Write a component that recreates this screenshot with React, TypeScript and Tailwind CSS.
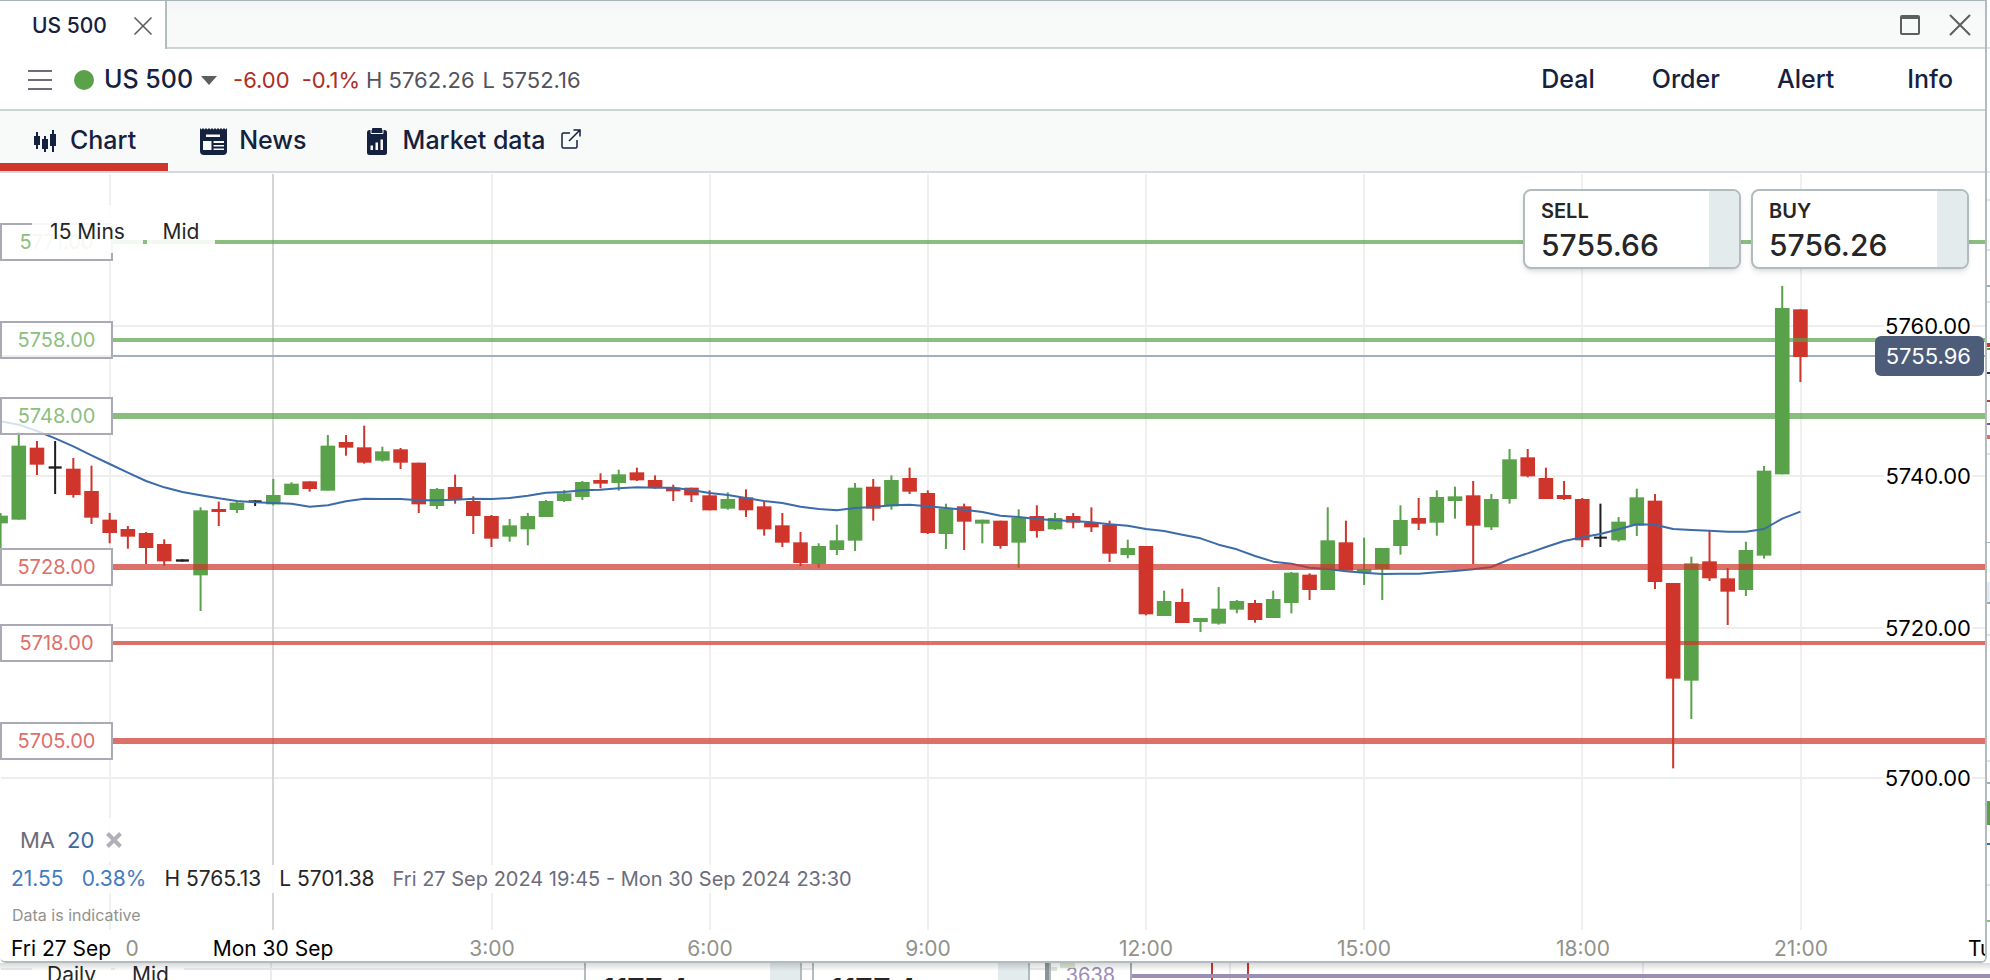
import { ReactNode } from 'react';
import { X } from 'lucide-react';

type Candle = [dir: 'g' | 'r' | 'k', high: number, top: number, bottom: number, low: number];

// prices are kept as offsets (thirds of a pixel) below BASE_Y
const BASE_Y = 227;
const START_X = 273.3;
const STEP = 18.18;
const FIRST = -15;

const candles: Candle[] = [
  ['g', 339, 347, 370, 555], ['g', 95, 137, 359, 359], ['r', 123, 143, 194, 225], ['k', 123, 199, 206, 282],
  ['r', 174, 206, 285, 293], ['r', 197, 273, 353, 372], ['r', 339, 359, 399, 430], ['r', 378, 387, 410, 446],
  ['r', 396, 399, 444, 492], ['r', 418, 432, 484, 497], ['k', 478, 478, 485, 485], ['g', 322, 331, 526, 633],
  ['r', 305, 327, 336, 378], ['g', 305, 308, 330, 339], ['k', 301, 301, 307, 318], ['g', 237, 285, 313, 316],
  ['g', 247, 251, 285, 285], ['r', 244, 244, 267, 275], ['g', 105, 137, 272, 272], ['r', 105, 126, 143, 167],
  ['r', 77, 142, 188, 191], ['g', 140, 154, 182, 185], ['r', 144, 148, 188, 207], ['r', 188, 188, 313, 339],
  ['g', 264, 267, 318, 327], ['r', 224, 261, 298, 311], ['r', 289, 303, 348, 402], ['r', 345, 348, 416, 441],
  ['g', 357, 376, 410, 425], ['g', 339, 348, 388, 436], ['g', 300, 303, 351, 351], ['g', 270, 280, 303, 306],
  ['g', 243, 246, 291, 300], ['r', 220, 240, 251, 265], ['g', 209, 223, 249, 272], ['r', 203, 217, 241, 243],
  ['r', 226, 240, 263, 266], ['r', 254, 263, 274, 303], ['r', 263, 263, 286, 306], ['r', 271, 286, 331, 331],
  ['g', 277, 297, 326, 329], ['r', 268, 292, 331, 351], ['r', 305, 319, 388, 407], ['r', 339, 376, 428, 441],
  ['r', 396, 427, 489, 498], ['g', 430, 438, 492, 503], ['g', 374, 421, 450, 465], ['g', 249, 263, 422, 453],
  ['r', 237, 260, 326, 362], ['g', 226, 240, 319, 329], ['r', 203, 234, 275, 282], ['r', 271, 279, 399, 402],
  ['g', 311, 325, 402, 447], ['r', 311, 319, 365, 450], ['g', 359, 359, 371, 430], ['r', 362, 362, 438, 446],
  ['g', 328, 353, 428, 503], ['r', 316, 348, 393, 413], ['g', 339, 354, 388, 390], ['r', 339, 348, 368, 385],
  ['r', 322, 368, 382, 396], ['r', 362, 374, 461, 486], ['g', 419, 444, 465, 475], ['r', 438, 438, 643, 646],
  ['g', 572, 603, 648, 648], ['r', 566, 606, 669, 669], ['g', 654, 654, 666, 696], ['g', 561, 626, 671, 674],
  ['g', 600, 603, 629, 640], ['r', 600, 609, 660, 668], ['g', 572, 597, 654, 654], ['g', 516, 518, 609, 640],
  ['r', 520, 524, 570, 600], ['g', 322, 421, 570, 570], ['r', 362, 427, 512, 512], ['g', 413, 508, 516, 555],
  ['g', 444, 444, 507, 600], ['g', 316, 360, 438, 464], ['r', 294, 354, 371, 390], ['g', 271, 291, 368, 407],
  ['g', 260, 289, 303, 356], ['r', 243, 286, 377, 492], ['g', 282, 297, 382, 390], ['g', 147, 178, 297, 311],
  ['r', 147, 172, 229, 232], ['r', 203, 234, 297, 297], ['r', 243, 285, 297, 300], ['r', 294, 297, 421, 441],
  ['k', 311, 410, 416, 441], ['g', 351, 365, 421, 425], ['g', 266, 292, 377, 408], ['r', 282, 302, 546, 567],
  ['r', 549, 549, 836, 1105], ['g', 470, 490, 842, 957], ['r', 392, 484, 535, 543], ['r', 504, 535, 575, 675],
  ['g', 425, 450, 570, 588], ['g', 198, 212, 467, 476], ['g', -342, -276, 223, 223], ['r', -272, -272, -129, -54],
];

const movingAverage = [
  64, 74, 93, 115, 139, 166, 192, 218, 243, 262, 276, 286, 295, 303, 307, 309, 311, 320, 316, 304,
  296, 297, 297, 301, 301, 299, 296, 297, 294, 287, 278, 276, 271, 269, 265, 262, 263, 263, 270, 279,
  285, 294, 303, 309, 320, 327, 331, 324, 321, 316, 314, 319, 324, 329, 336, 347, 351, 357, 361, 363,
  367, 373, 377, 387, 393, 404, 415, 434, 448, 468, 485, 491, 503, 507, 514, 518, 522, 521, 521, 517,
  513, 508, 501, 478, 460, 441, 423, 412, 402, 388, 373, 374, 387, 390, 392, 395, 395, 387, 356, 335,
];

const fills = { g: '#59a249', r: '#cf352b', k: '#1f1f1f' };

const levels = [
  { price: '5771.00', y: 69, width: 4, color: '#59a249', text: 'text-[#8bbf80]' },
  { price: '5758.00', y: 167, width: 4, color: '#59a249', text: 'text-[#8bbf80]' },
  { price: '5748.00', y: 243, width: 6, color: '#59a249', text: 'text-[#8bbf80]' },
  { price: '5728.00', y: 394, width: 6, color: '#cf352b', text: 'text-[#dd7069]' },
  { price: '5718.00', y: 470, width: 4, color: '#cf352b', text: 'text-[#dd7069]' },
  { price: '5705.00', y: 568, width: 6, color: '#cf352b', text: 'text-[#dd7069]' },
];

const prices = [
  { label: '5760.00', y: 153 },
  { label: '5740.00', y: 303 },
  { label: '5720.00', y: 455 },
  { label: '5700.00', y: 605 },
];

const times = [
  { label: 'Fri 27 Sep', x: 61, day: true },
  { label: '0', x: 132 },
  { label: 'Mon 30 Sep', x: 273, day: true },
  { label: '3:00', x: 492 },
  { label: '6:00', x: 710 },
  { label: '9:00', x: 928 },
  { label: '12:00', x: 1146 },
  { label: '15:00', x: 1364 },
  { label: '18:00', x: 1583 },
  { label: '21:00', x: 1801 },
  { label: 'Tue 1 Oct', x: 2014, day: true },
];

const gridX = [110, 492, 710, 928, 1146, 1364, 1582, 1801];

const xAt = (i: number) => START_X + (FIRST + i) * STEP;
const yAt = (v: number) => BASE_Y + v / 3;

function CandlesIcon() {
  return (
    <svg className="h-[22px] w-[26px]" viewBox="0 0 24 22" fill="#14213f">
      <path d="M1 6h6v9H1zM3 2h2v17H3zM9 9h6v10H9zM11 6h2v16h-2zM17 4h6v12h-6zM19 0h2v22h-2z" />
    </svg>
  );
}

function NewsIcon() {
  return (
    <svg className="h-[27px] w-[27px]" viewBox="0 0 27 27">
      <path
        fill="#14213f"
        d="M0 0l1.500 1.500L3 0l1.500 1.500L6 0l1.500 1.500L9 0l1.500 1.500L12 0l1.500 1.500L15 0l1.500 1.500L18 0l1.500 1.500L21 0l1.500 1.500L24 0l1.500 1.500L27 0v23a4 4 0 0 1-4 4H4a4 4 0 0 1-4-4z"
      />
      <path fill="#f8faf9" d="M6 6.500h14V9H6zM3 13h8.500v9H3zM13.500 13H24v2H13.500zM13.500 17H24v1.500H13.500zM13.500 20.500H24V22H13.500z" />
    </svg>
  );
}

function MarketIcon() {
  return (
    <svg className="h-[27px] w-6" viewBox="0 0 24 27">
      <rect y="2" width="20" height="25" rx="2.500" fill="#14213f" />
      <path d="M4 2v3.500h12V2" fill="none" stroke="#f8faf9" strokeWidth="1" />
      <rect x="5" y="0" width="10" height="4.500" rx="1" fill="#14213f" />
      <path fill="#f8faf9" d="M3.500 17.500h2.500v4.500H3.500zM8.500 14.500H11V22H8.500zM13.500 11.500H16V22h-2.500z" />
    </svg>
  );
}

function ExternalIcon() {
  return (
    <svg className="mb-1 h-5 w-5" viewBox="0 0 20 20" fill="none" stroke="#14213f" strokeWidth="1.500">
      <path d="M9 4H2.500A1.500 1.500 0 0 0 1 5.500v12A1.500 1.500 0 0 0 2.500 19h12a1.500 1.500 0 0 0 1.500-1.500V11" />
      <path d="M12.500 1H19v6.500M19 1L8 12" />
    </svg>
  );
}

function Tab({ icon, label, active, children }: { icon: ReactNode; label: string; active?: boolean; children?: ReactNode }) {
  return (
    <button
      className={`flex h-full items-center border-b-8 pt-2 pl-8 text-[25px] font-medium text-[#14213f] ${
        active ? 'border-[#cf352b] pr-8' : 'border-transparent'
      }`}
    >
      {icon}
      <span className="ml-3">{label}</span>
      {children}
    </button>
  );
}

function PriceBox({ side, price }: { side: string; price: string }) {
  return (
    <button className="flex h-20 w-[218px] overflow-hidden rounded-lg border-2 border-[#b2bcbf] bg-white text-left text-[#262626] shadow-md">
      <span className="flex flex-1 flex-col pt-[6px] pl-4">
        <span className="text-xl leading-7 font-semibold">{side}</span>
        <span className="text-[30px] leading-10 font-medium">{price}</span>
      </span>
      <span className="w-[30px] self-stretch bg-[#e3ebed]" />
    </button>
  );
}

function Plot() {
  return (
    <svg className="absolute inset-0 h-full w-full" aria-label="US 500 15 minute chart">
      {prices.map((p) => (
        <line key={p.label} x1="1" x2="100%" y1={p.y} y2={p.y} stroke="#eeeeef" strokeWidth="2" />
      ))}
      {gridX.map((x) => (
        <line key={x} x1={x} x2={x} y1="1" y2="757" stroke="#efeff0" strokeWidth="2" />
      ))}
      <line x1="273" x2="273" y1="1" y2="757" stroke="#d4d4d9" strokeWidth="2" />
      <line x1="0" x2="100%" y1="183" y2="183" stroke="#a2adbd" strokeWidth="2" />

      {candles.map(([dir, high, top, bottom, low], i) => {
        const w = dir === 'k' ? 13 : 14.6;
        return (
          <g key={i} fill={fills[dir]}>
            <rect x={xAt(i) - 1} y={yAt(high)} width="2" height={(low - high) / 3} />
            <rect x={xAt(i) - w / 2} y={yAt(top)} width={w} height={(bottom - top) / 3} />
          </g>
        );
      })}

      <polyline
        fill="none"
        stroke="#3b6ba8"
        strokeWidth="2"
        strokeLinejoin="round"
        points={movingAverage.map((v, i) => `${xAt(i)},${yAt(v)}`).join(' ')}
      />

      {levels.map((l) => (
        <line
          key={l.price}
          x1="112"
          x2="100%"
          y1={l.y}
          y2={l.y}
          stroke={l.color}
          strokeWidth={l.width}
          strokeOpacity="0.7"
        />
      ))}
    </svg>
  );
}

function Chart() {
  return (
    <main className="relative min-h-[760px] flex-1 overflow-hidden bg-white">
      <Plot />

      {levels.map((l) => (
        <div
          key={l.price}
          className={`absolute left-0 flex h-[38px] w-[113px] -translate-y-1/2 items-center justify-center border-2 border-[#aaaab6] bg-white/80 text-xl ${l.text}`}
          style={{ top: l.y }}
        >
          {l.price}
        </div>
      ))}

      <div className="absolute top-8 left-8 flex gap-1 text-[21px] text-[#262626]">
        <button className="h-12 w-[111px] bg-white/90 pt-[6px]">15 Mins</button>
        <button className="h-12 w-[68px] bg-white/90 pt-[6px]">Mid</button>
      </div>

      <div className="absolute top-4 right-4 flex gap-[10px]">
        <PriceBox side="SELL" price="5755.66" />
        <PriceBox side="BUY" price="5756.26" />
      </div>

      {prices.map((p) => (
        <div
          key={p.label}
          className="absolute right-[13px] -translate-y-1/2 bg-white px-px text-[22px] leading-5 text-black"
          style={{ top: p.y }}
        >
          {p.label}
        </div>
      ))}
      <div className="absolute top-[163px] right-[1px] flex h-10 items-center rounded-md bg-[#4d5c79] pt-px pr-[13px] pl-[11px] text-[22px] text-white">
        5755.96
      </div>

      <div className="absolute bottom-0 left-0 w-full">
        <div className="flex flex-col items-start">
          <div className="mb-[3px] ml-3 flex h-11 items-center gap-3 bg-white/90 px-2 text-[22px]">
            <span className="text-[#6c6c78]">MA</span>
            <span className="text-[#3b67a5]">20</span>
            <button aria-label="Remove moving average">
              <svg className="h-4 w-4" viewBox="0 0 16 16" stroke="#b0b0b8" strokeWidth="4">
                <path d="M1.500 1.500l13 13M14.500 1.500l-13 13" />
              </svg>
            </button>
          </div>
          <div className="flex h-7 items-center gap-[18px] bg-white/90 pr-3 pl-[11px] text-[21px] whitespace-nowrap">
            <span className="text-[#447bc0]">21.55</span>
            <span className="text-[#447bc0]">0.38%</span>
            <span className="text-[#262626]">H 5765.13</span>
            <span className="text-[#262626]">L 5701.38</span>
            <span className="text-xl text-[#6c6c7c]">Fri 27 Sep 2024 19:45 - Mon 30 Sep 2024 23:30</span>
          </div>
          <p className="flex h-10 items-center pt-1 pl-3 text-base text-[#92928f]">Data is indicative</p>
        </div>
        <div className="relative h-7 bg-white text-[21px] leading-8">
          {times.map((t) => (
            <span
              key={t.label}
              className={`absolute top-0 -translate-x-1/2 whitespace-nowrap ${t.day ? 'text-black' : 'text-[#92928c]'}`}
              style={{ left: t.x }}
            >
              {t.label}
            </span>
          ))}
        </div>
      </div>
    </main>
  );
}

// slivers of the windows that sit behind this one
function RightEdge() {
  return (
    <svg className="h-full w-[3px] shrink-0 bg-white" viewBox="0 0 3 963">
      <path
        fill="#e2e4e6"
        d="M0 47h3v2H0zM0 171h3v2H0zM0 199h3v2H0zM0 249h3v2H0zM0 301h3v2H0zM0 453h3v2H0zM0 634h3v2H0zM0 760h3v2H0zM0 884h3v2H0z"
      />
      <path fill="#a2adbd" d="M0 285h3v2H0zM0 542h3v1H0zM0 602h3v2H0zM0 782h3v2H0z" />
      <path fill="#cf352b" d="M0 343h3v4H0zM0 400h3v2H0z" />
      <path fill="#dd7069" d="M0 435h3v4H0z" />
      <path fill="#33334a" d="M0 372h3v2H0z" />
      <path fill="#6e5f99" d="M0 423h3v2H0z" />
      <path fill="#e3edf8" d="M0 582h3v20H0z" />
      <path fill="#59a249" d="M0 348h3v2H0zM0 801h3v24H0z" />
      <path fill="#3b6ba8" d="M0 843h3v2H0z" />
      <path fill="#8bbf80" d="M0 920h3v2H0z" />
    </svg>
  );
}

function BackCard({ price }: { price: string }) {
  return (
    <div className="flex h-12 w-[218px] justify-end border-x-2 border-[#b2bcbf] bg-white">
      <span className="flex-1 pt-2 pl-4 text-[30px] leading-9 font-semibold text-[#262626]">{price}</span>
      <span className="w-[30px] bg-[#e3ebed]" />
    </div>
  );
}

function BehindStrip() {
  return (
    <div className="relative flex h-[17px] shrink-0 overflow-hidden bg-white">
      <div className="relative flex w-[1045px] shrink-0 text-[21px] text-[#262626]">
        <svg className="absolute inset-0 h-full w-full">
          <path stroke="#ececee" strokeWidth="2" d="M1 6H32M111 6H115M184 6H1045M271 0V17" />
        </svg>
        <span className="ml-[47px] leading-6">Daily</span>
        <span className="ml-9 leading-6">Mid</span>
        <div className="absolute top-0 right-[15px] flex gap-[10px]">
          <BackCard price="1177.4" />
          <BackCard price="1177.4" />
        </div>
      </div>
      <div className="w-[6px] shrink-0 border-r-2 border-[#b2bcbf] bg-[#8b9496]" />
      <div className="relative flex w-[81px] shrink-0 justify-center border-r-2 border-[#aaaab6] text-xl leading-6 text-[#9b8db5]">
        <svg className="absolute top-0 left-0 h-2 w-6" fill="#d9e8d5">
          <path d="M0 4h6v4H0zM9 0h15v5H9z" />
        </svg>
        3638
      </div>
      <svg className="h-full flex-1">
        <path stroke="#ececee" strokeWidth="2" d="M98 0V17M511 0V17" />
        <path stroke="#cf352b" strokeWidth="2" d="M80 0V17M116 0V17" />
        <rect y="11" width="100%" height="4" fill="#9b8db5" />
      </svg>
      <div className="absolute inset-x-0 top-0 h-2 bg-gradient-to-b from-black/15 to-transparent" />
    </div>
  );
}

export default function App() {
  return (
    <div className="flex h-screen flex-col overflow-hidden bg-white font-['Inter',sans-serif]">
      <div className="flex min-h-0 flex-1">
        <section className="flex min-w-0 flex-1 flex-col overflow-hidden rounded-b-md border-r-2 border-b-2 border-[#b2bcbf]">
          <div className="flex h-[49px] shrink-0 items-stretch border-t border-[#a9b3b8] bg-gradient-to-b from-[#f2f4f6] to-[#f8faf9] to-30%">
            <div className="flex w-[167px] items-center justify-between border-r-2 border-[#b2bcbf] bg-white pt-px pr-[6px] pl-8 text-[21px] font-medium text-[#14213f]">
              US 500
              <button aria-label="Close tab">
                <X className="h-8 w-8 text-[#5c5f60]" strokeWidth={1.25} />
              </button>
            </div>
            <div className="flex flex-1 items-center justify-end gap-[21px] border-b-2 border-[#cdd4d6] pt-px pr-[6px]">
              <button aria-label="Maximise">
                <svg className="h-5 w-5" viewBox="0 0 20 20">
                  <rect x="1" y="1" width="18" height="18" rx="1" fill="none" stroke="#5c5f60" strokeWidth="2" />
                  <path d="M1 1h18v3H1z" fill="#5c5f60" />
                </svg>
              </button>
              <button aria-label="Close window">
                <X className="h-[38px] w-[38px] text-[#5c5f60]" strokeWidth={1.25} />
              </button>
            </div>
          </div>

          <header className="flex h-[62px] shrink-0 items-center border-b-2 border-[#cdd4d6] pt-[2px] pr-8 pl-7 whitespace-nowrap">
            <button aria-label="Menu" className="flex h-5 w-6 flex-col justify-between">
              <span className="h-[2px] w-full bg-[#6c6c7c]" />
              <span className="h-[2px] w-full bg-[#6c6c7c]" />
              <span className="h-[2px] w-full bg-[#6c6c7c]" />
            </button>
            <span className="ml-[22px] h-5 w-5 rounded-full bg-[#59a249]" />
            <button className="ml-[10px] flex items-center text-[25px] font-medium text-[#14213f]">
              US 500
              <svg className="ml-2 h-[9px] w-4" viewBox="0 0 16 9">
                <path d="M0 0h16L8 9z" fill="#5c5f60" />
              </svg>
            </button>
            <div className="ml-4 flex text-[22px] text-[#53535d]">
              <span className="text-[#ad2d25]">-6.00</span>
              <span className="ml-3 text-[#ad2d25]">-0.1%</span>
              <span className="ml-[6px]">H 5762.26</span>
              <span className="ml-2">L 5752.16</span>
            </div>
            <nav className="ml-auto flex gap-[57px] text-[25px] font-medium text-[#14213f]">
              <button>Deal</button>
              <button>Order</button>
              <button>Alert</button>
              <button className="ml-4">Info</button>
            </nav>
          </header>

          <div className="flex h-[62px] shrink-0 border-b-2 border-[#d5d8dc] bg-[#f8faf9]">
            <Tab icon={<CandlesIcon />} label="Chart" active />
            <Tab icon={<NewsIcon />} label="News" />
            <span className="w-7" />
            <Tab icon={<MarketIcon />} label="Market data">
              <span className="ml-4">
                <ExternalIcon />
              </span>
            </Tab>
          </div>

          <Chart />
        </section>
        <RightEdge />
      </div>
      <BehindStrip />
    </div>
  );
}
